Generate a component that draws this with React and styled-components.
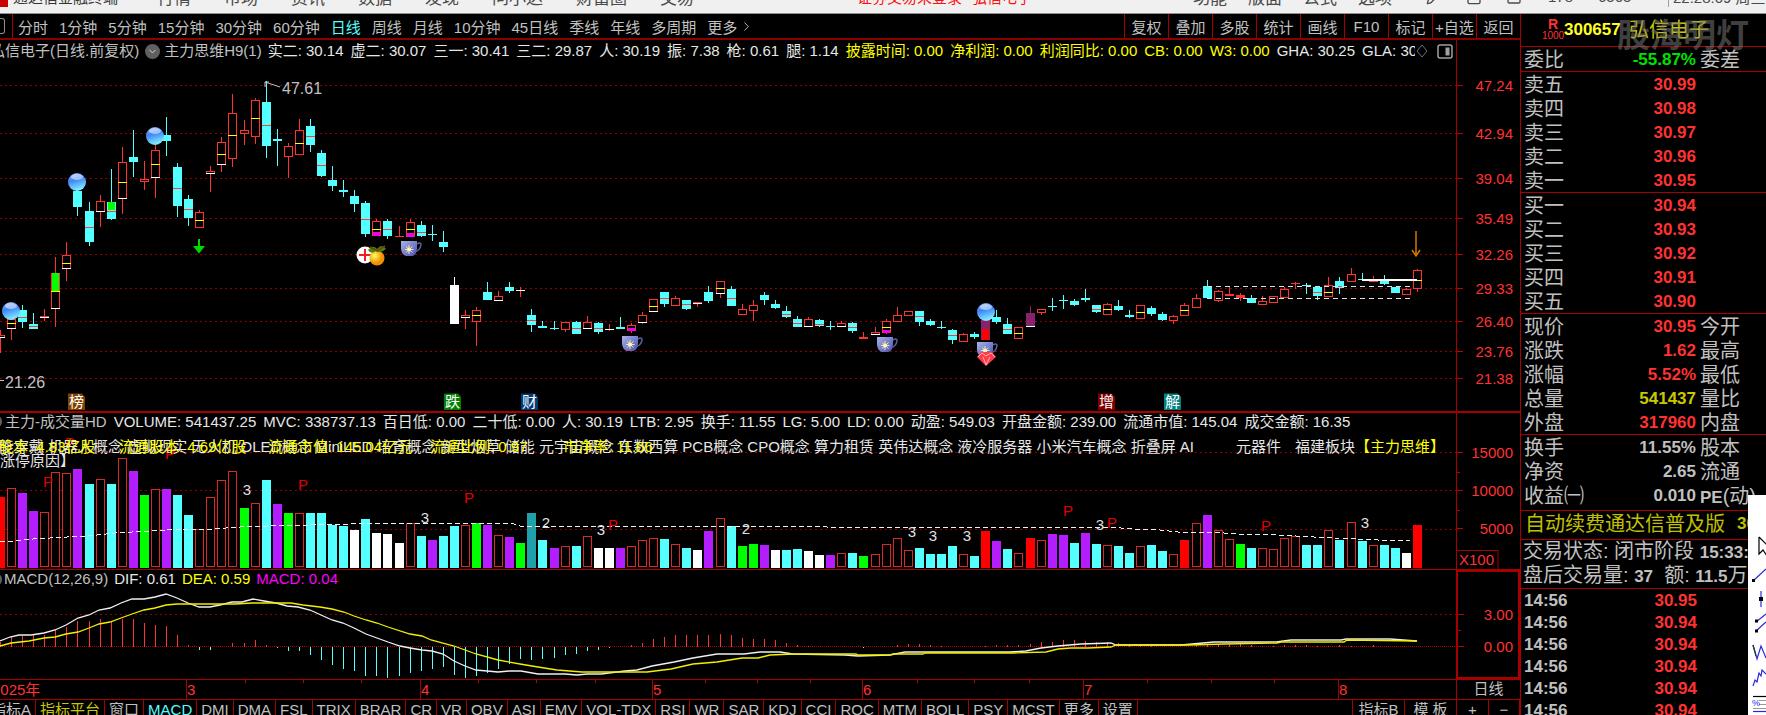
import React from "react";
import styled, { createGlobalStyle } from "styled-components";
import { Pencil, Lock, Square, ChevronDown, ChevronRight } from "lucide-react";

const RED = "#a80000";
const GREY = "#c0c0c0";
const CYAN = "#54ffff";
const UP = "#ff3232";

const GlobalStyle = createGlobalStyle`
  * { box-sizing: border-box; }
  body {
    margin: 0;
    background: #000;
    overflow: hidden;
    font-family: "Liberation Sans", "Noto Sans CJK SC", sans-serif;
    font-size: 15px;
    color: ${GREY};
  }
  button {
    margin: 0;
    padding: 0;
    border: 0;
    background: none;
    color: inherit;
    font: inherit;
    white-space: nowrap;
    cursor: pointer;
  }
`;

const Page = styled.div`
  display: flex;
  flex-direction: column;
  height: 100vh;
  overflow: hidden;
`;

/* ---------- menu bar ---------- */
const MenuBar = styled.header`
  display: flex;
  flex: none;
  align-items: center;
  height: 34px;
  margin-top: -20px;
  background: #f0f0f0;
  border-bottom: 1px solid #909090;
  color: #4a4a4a;
  white-space: nowrap;
  overflow: hidden;
`;
const Logo = styled.span`
  width: 8px;
  height: 20px;
  margin-right: 5px;
  background: #cc0000;
`;
const Brand = styled.span`
  margin-right: 39px;
  color: #333;
`;
const MenuGroup = styled.nav`
  display: flex;
  gap: ${(p) => p.$gap}px;
  font-size: 17px;
`;
const Alert = styled.span`
  display: flex;
  gap: 10px;
  margin-left: 163px;
  color: #ff1010;
`;
const MenuRight = styled.div`
  display: flex;
  align-items: center;
  width: 573px;
  margin-left: auto;
`;
const MenuIcons = styled.div`
  display: flex;
  gap: 24px;
  width: 122px;
  margin-left: 34px;
`;
const Count = styled.span`
  width: 50px;
`;
const Clock = styled.span`
  margin-left: 20px;
  padding-left: 4px;
  border-left: 1px solid #a0a0a0;
`;

/* ---------- page frame ---------- */
const Body = styled.div`
  display: flex;
  flex: 1;
  min-height: 0;
`;
const Main = styled.main`
  display: flex;
  flex: 1;
  flex-direction: column;
  min-width: 0;
`;
const Toolbar = styled.div`
  display: flex;
  flex: none;
  height: 26px;
  border-bottom: 2px solid #8b0000;
  overflow: hidden;
`;
const Handle = styled.button`
  width: 13px;
  flex: none;
  border-right: 1px solid ${RED};
  display: flex;
  align-items: center;
  &::before {
    content: "";
    width: 4px;
    height: 14px;
    border: 1px solid #909090;
    border-left: 0;
    border-radius: 0 3px 3px 0;
  }
`;
const Periods = styled.div`
  display: flex;
  align-items: center;
  gap: 11px;
  flex: 1;
  min-width: 0;
  padding-left: 5px;
  overflow: hidden;
`;
const Period = styled.button`
  display: flex;
  align-items: center;
  gap: 2px;
  color: ${(p) => (p.$active ? CYAN : GREY)};
`;
const Tools = styled.div`
  display: flex;
  flex: none;
`;
const Tool = styled.button`
  width: 44px;
  border-left: 1px solid ${RED};
`;

/* ---------- chart panels ---------- */
const Panel = styled.section`
  display: flex;
  flex: none;
  border-bottom: ${(p) => p.$line}px solid ${RED};
`;
const Plot = styled.div`
  flex: 1;
  min-width: 0;
`;
const Info = styled.div`
  display: flex;
  align-items: center;
  gap: ${(p) => p.$gap || 6}px;
  height: ${(p) => p.$h}px;
  margin-left: ${(p) => p.$shift || 0}px;
  padding-bottom: 2px;
  line-height: 18px;
  white-space: nowrap;
`;
const Values = styled.div`
  display: flex;
  flex: 1;
  align-items: baseline;
  gap: 7px;
  min-width: 0;
  overflow: hidden;
`;
const Value = styled.span`
  flex: none;
  color: ${(p) => p.$color || "#e6e6e6"};
`;
const Name = styled.span`
  flex: none;
`;
const Fold = styled.button`
  display: flex;
  flex: none;
  align-items: center;
  justify-content: center;
  width: 15px;
  height: 15px;
  margin-right: ${(p) => p.$tight || 0}px;
  border-radius: 50%;
  background: #606060;
  color: #ddd;
`;
const InfoIcons = styled.div`
  display: flex;
  flex: none;
  align-items: center;
  gap: 9px;
  width: 40px;
  margin-left: -5px;
`;
const Chart = styled.svg`
  display: block;
  width: 100%;
  height: ${(p) => p.$h}px;
  font-size: 15px;
`;
const Axis = styled.div`
  width: 64px;
  flex: none;
  border: 0 solid ${RED};
  border-left-width: 1px;
  ${(p) => p.$boxed && `border-width: 2px;`}
`;

const TimeRow = styled.div`
  display: flex;
  flex: none;
  height: 20px;
  border-bottom: 1px solid ${RED};
`;
const TimeUnit = styled.button`
  width: 64px;
  padding-bottom: 2px;
  border-left: 1px solid ${RED};
  line-height: 16px;
`;
const Tabs = styled.div`
  display: flex;
  flex: none;
  height: 20px;
`;
const TabList = styled.div`
  display: flex;
  flex: 1;
  min-width: 0;
  margin-left: -13px;
  overflow: hidden;
`;
const Tab = styled.button`
  flex: none;
  min-width: ${(p) => p.$w || 0}px;
  padding: 0 4px;
  border-right: 1px solid ${RED};
  color: ${(p) => p.$color || GREY};
  line-height: 18px;
`;
const TabEnd = styled.div`
  display: flex;
  border-left: 1px solid ${RED};
`;

/* ---------- quote panel ---------- */
const Side = styled.aside`
  position: relative;
  flex: none;
  width: 246px;
  border-left: 1px solid ${RED};
  overflow: hidden;
`;
const StockHead = styled.div`
  display: flex;
  align-items: center;
  height: 33px;
  padding-left: 22px;
  border-bottom: 1px solid ${RED};
  line-height: 24px;
  white-space: nowrap;
`;
const Margin = styled.span`
  display: flex;
  flex-direction: column;
  align-items: center;
  width: 20px;
  margin-right: 1px;
  color: ${UP};
  font: 10px/12px "Liberation Sans", sans-serif;
  b { font-size: 14px; }
`;
const Code = styled.b`
  width: 65px;
  color: #ffff20;
  font-size: 17px;
`;
const StockName = styled.span`
  color: #c8c800;
  font-size: 20px;
`;
const Watermark = styled.span`
  position: absolute;
  left: 96px;
  top: 2px;
  z-index: 1;
  color: rgba(120, 120, 120, 0.55);
  font-size: 33px;
  font-weight: 700;
  line-height: 40px;
  pointer-events: none;
`;
const Quote = styled.table`
  width: 100%;
  table-layout: fixed;
  border-collapse: separate;
  border-spacing: 0;
  padding-bottom: ${(p) => p.$pad || 0}px;
  border-bottom: 1px solid ${RED};
  white-space: nowrap;
  th, td {
    height: 24px;
    padding: 2px 0 0;
    font-size: 20px;
    font-weight: 400;
    line-height: 22px;
    text-align: left;
  }
  th:first-child { width: 74px; padding-left: 3px; }
  td { width: 101px; }
  td + th { padding-left: 4px; }
`;
const Num = styled.td`
  && {
    color: ${(p) => p.$color || UP};
    font-size: 17px;
    font-weight: 700;
    text-align: right;
  }
`;
const Strong = styled.b`
  font-size: 17px;
  line-height: 1;
`;
const Note = styled.div`
  display: flex;
  align-items: center;
  gap: 12px;
  height: 29px;
  padding: 0 0 3px 4px;
  border-bottom: 1px solid ${RED};
  color: #c0c000;
  font-size: 20px;
  line-height: 22px;
  white-space: nowrap;
`;
const Status = styled.div`
  border-bottom: 1px solid ${RED};
`;
const StatusLine = styled.div`
  height: 24px;
  padding-left: 2px;
  font-size: 20px;
  line-height: 22px;
  white-space: nowrap;
`;
const Ticks = styled.table`
  width: 176px;
  padding-top: 1px;
  border-spacing: 0;
  td {
    height: 22px;
    padding: 0 0 0 3px;
    font-size: 17px;
    font-weight: 700;
    line-height: 20px;
  }
  td + td { padding: 0; color: ${UP}; text-align: right; }
`;
const DrawPanel = styled.div`
  position: absolute;
  top: 481px;
  right: 0;
  bottom: 0;
  width: 18px;
  background: #fff;
  overflow: hidden;
`;

/* ---------- data ---------- */
const PITCH = 11.07;
const cx = (i) => Math.round(i * PITCH);

// kind, high, body top, body bottom, low, {y: mid mark, w: white base, g/m/r: coloured part}
const candles = [
  ["h", 330, 335, 338, 353, { w: 1 }], ["h", 318, 319, 329, 340, { y: 323, w: 1 }],
  ["c", 305, 310, 322, 328, { y: 317 }], ["c", 313, 324, 329, 329, { y: 326 }],
  ["h", 309, 316, 318, 321, { w: 1 }], ["h", 257, 273, 309, 327, { y: 291, w: 1, g: [273, 291] }],
  ["h", 242, 255, 269, 281, { y: 263, w: 1 }], ["c", 190, 191, 207, 216, {}],
  ["c", 202, 211, 242, 246, { y: 227 }], ["h", 195, 201, 212, 227, { w: 1 }],
  ["c", 169, 202, 219, 220, { y: 211, g: [202, 210] }], ["h", 147, 162, 199, 214, { y: 182, w: 1 }],
  ["c", 130, 157, 162, 177, {}], ["h", 161, 179, 182, 190, {}],
  ["h", 144, 150, 178, 198, { y: 164, w: 1 }], ["c", 117, 135, 141, 156, {}],
  ["c", 163, 167, 206, 217, { y: 188 }], ["c", 195, 199, 218, 226, { y: 209 }],
  ["h", 210, 212, 228, 228, { y: 220 }], ["h", 166, 171, 174, 192, { w: 1 }],
  ["h", 137, 142, 165, 172, { y: 154, w: 1 }], ["h", 94, 113, 159, 167, { y: 135 }],
  ["h", 120, 130, 134, 145, {}], ["h", 98, 100, 137, 144, { y: 118 }],
  ["c", 81, 102, 146, 158, { y: 125 }], ["c", 129, 139, 141, 166, {}],
  ["h", 143, 146, 157, 178, {}], ["h", 119, 130, 155, 155, { y: 143 }],
  ["c", 119, 126, 145, 152, { y: 136 }], ["c", 150, 153, 176, 177, { y: 165 }],
  ["c", 166, 180, 186, 191, {}], ["c", 180, 190, 192, 197, {}],
  ["c", 190, 196, 204, 212, {}], ["c", 201, 203, 234, 237, { y: 219 }],
  ["h", 219, 221, 236, 236, { y: 229, m: [232, 236] }], ["c", 219, 221, 236, 239, { y: 229 }],
  ["f", 226, 236, 237, 237, {}], ["h", 219, 222, 237, 237, { y: 229, m: [233, 237] }],
  ["c", 221, 225, 236, 237, { y: 232 }], ["c", 225, 234, 235, 241, {}],
  ["c", 231, 242, 247, 252, {}], ["w", 277, 285, 324, 324, {}],
  ["h", 310, 315, 318, 329, { w: 1 }], ["h", 307, 310, 322, 346, { y: 315 }],
  ["c", 282, 292, 300, 300, {}], ["h", 291, 296, 301, 301, { w: 1 }],
  ["c", 282, 287, 291, 293, {}], ["f", 287, 290, 291, 297, { w: 1 }],
  ["c", 309, 315, 325, 332, { y: 320 }], ["c", 321, 326, 328, 328, {}],
  ["c", 321, 328, 329, 330, {}], ["h", 322, 322, 330, 332, {}],
  ["c", 321, 322, 334, 334, { y: 328 }], ["h", 316, 322, 329, 329, { w: 1 }],
  ["c", 322, 323, 332, 334, { y: 328 }], ["f", 324, 329, 330, 331, { w: 1 }],
  ["c", 317, 327, 329, 329, {}], ["h", 323, 325, 331, 333, { m: [328, 331] }],
  ["h", 312, 315, 323, 324, { w: 1 }], ["h", 299, 299, 312, 312, { y: 306, w: 1 }],
  ["c", 292, 292, 304, 307, { y: 298 }], ["h", 296, 298, 306, 306, {}],
  ["c", 300, 300, 309, 310, { y: 304 }], ["f", 302, 302, 304, 307, { w: 1 }],
  ["c", 286, 292, 301, 303, {}], ["h", 281, 281, 294, 298, { y: 288, w: 1 }],
  ["c", 286, 289, 306, 306, { y: 298 }], ["h", 304, 309, 315, 315, {}],
  ["h", 300, 305, 311, 321, {}], ["c", 292, 295, 300, 305, {}],
  ["c", 300, 304, 308, 309, {}], ["c", 306, 311, 317, 318, { y: 314 }],
  ["c", 316, 319, 327, 327, { y: 323 }], ["h", 317, 319, 327, 327, { w: 1 }],
  ["c", 319, 320, 326, 327, { y: 324 }], ["c", 321, 326, 327, 330, {}],
  ["h", 321, 323, 327, 327, { w: 1 }], ["c", 322, 323, 331, 333, { y: 327 }],
  ["f", 332, 337, 339, 339, {}], ["h", 327, 332, 335, 335, { w: 1 }],
  ["h", 319, 321, 333, 334, { y: 327, m: [330, 333] }], ["h", 307, 315, 322, 322, {}],
  ["h", 311, 311, 316, 316, {}], ["c", 311, 311, 322, 326, { y: 316 }],
  ["c", 319, 321, 325, 326, {}], ["c", 321, 327, 328, 329, {}],
  ["c", 329, 330, 340, 344, { y: 335 }], ["h", 333, 334, 342, 342, {}],
  ["c", 332, 334, 337, 339, {}], ["p", 320, 320, 340, 340, { r: [329, 340] }],
  ["c", 310, 317, 322, 324, {}], ["c", 318, 324, 334, 334, { y: 329 }],
  ["h", 327, 327, 339, 339, { y: 333 }], ["p", 306, 313, 327, 327, { w: 1 }],
  ["h", 309, 309, 313, 315, {}], ["c", 298, 306, 307, 311, {}],
  ["c", 295, 300, 301, 309, {}], ["c", 299, 301, 305, 306, {}],
  ["c", 289, 298, 300, 302, {}], ["c", 305, 305, 312, 313, { y: 309 }],
  ["h", 303, 304, 315, 315, { y: 309 }], ["c", 300, 306, 310, 311, {}],
  ["c", 310, 315, 317, 318, {}], ["h", 305, 305, 319, 319, { y: 312 }],
  ["c", 306, 308, 314, 316, {}], ["c", 312, 314, 320, 321, {}],
  ["h", 315, 316, 321, 324, {}], ["h", 303, 305, 316, 316, { y: 310 }],
  ["h", 294, 298, 308, 308, {}], ["c", 280, 286, 298, 298, {}],
  ["h", 290, 291, 301, 302, {}], ["f", 287, 294, 296, 296, {}],
  ["f", 293, 295, 298, 301, {}], ["c", 295, 298, 303, 303, {}],
  ["h", 296, 301, 305, 305, {}], ["h", 296, 296, 303, 303, {}],
  ["h", 287, 289, 298, 298, {}], ["f", 282, 283, 284, 289, {}],
  ["c", 283, 285, 286, 294, {}], ["c", 286, 287, 296, 300, { y: 292 }],
  ["h", 277, 285, 297, 297, { y: 292 }], ["c", 277, 281, 288, 294, { y: 286 }],
  ["h", 268, 274, 282, 282, {}], ["c", 273, 279, 280, 280, {}],
  ["f", 276, 280, 282, 282, {}], ["c", 275, 280, 284, 285, {}],
  ["c", 287, 287, 293, 293, {}], ["h", 288, 289, 295, 295, {}],
  ["h", 269, 270, 289, 292, { y: 280 }],
];

// kind letter followed by the bar's height in pixels
const volumes =
  "r71 h80 p75 p57 h56 h96 h95 p99 c84 h89 c84 h110 p97 g73 h79 p79 c73 c53 h39 h71 h88 h97 g60 h65 c88 p64 g55 h55 c55 c55 c43 c42 w38 c49 w35 w34 w25 h45 c32 p28 c32 c42 h43 g45 p43 h33 p31 g25 t55 c28 p20 h22 c22 h32 w20 w20 p20 h22 h28 h30 c29 h24 c20 w18 p37 h50 c42 g22 g24 p23 w18 c18 c19 w17 w13 p13 h15 c15 g12 h14 h24 h30 h18 c20 c14 c14 c22 h14 c12 r37 p27 c19 h15 r30 h28 p34 p33 c25 p35 c24 h23 c22 c15 h22 c23 c17 h14 r28 h45 p53 h38 h29 g24 c20 h20 h19 h30 h32 c23 c23 h38 c28 h46 c27 h23 c23 c20 w15 r43".split(" ");

const volFill = { r: "#ff0000", p: "#b41eff", c: CYAN, g: "#00ff00", w: "#ffffff", t: "#20a0a8" };

const macdBars = [
  5, 10, 11, 12, 12, 17, 20, 26, 26, 28, 25, 28, 28, 24, 22, 21, 12, 2, -3, -3, 0, 4, 4, 7, 2, -1,
  -4, -4, -8, -13, -18, -22, -24, -29, -29, -31, -29, -26, -24, -22, -20, -28, -31, -29, -26, -22,
  -17, -12, -13, -12, -11, -8, -7, -4, -3, -1, 0, 2, 4, 8, 10, 12, 12, 12, 12, 13, 12, 9, 8, 8, 7,
  4, 2, 1, 0, 0, 0, 0, -1, 0, 0, 2, 3, 3, 2, 1, 0, 0, 0, 1, 2, 2, 2, 3, 5, 5, 7, 7, 6, 5, 5, 4, 2,
  2, 1, 0, 0, 0, 2, 2, 3, 3, 4, 2, 1, 1, 2, 2, 2, 1, 1, 2, 1, 1, 2,
];

const dif =
  "0,641 10,637 19,635 31,635 44,633 55,630 66,625 78,618 89,615 99,610 110,608 121,603 132,599 144,599 155,597 166,594 177,598 188,603 199,607 210,607 220,605 232,602 242,602 253,599 264,601 276,603 287,606 298,607 310,610 321,615 332,620 343,623 354,628 366,634 377,638 388,642 400,646 410,648 422,650 432,651 443,654 454,661 465,666 476,670 487,671 498,672 509,671 521,671 538,674 565,674 577,675 587,674 601,674 625,671 637,670 652,666 674,662 693,658 717,654 744,654 760,652 780,652 793,654 845,655 858,656 890,655 905,652 945,652 1010,652 1026,651 1041,648 1058,646 1081,644 1111,643 1116,645 1181,645 1214,642 1276,642 1291,640 1341,640 1346,639 1390,639 1417,641";
const dea =
  "0,646 11,643 29,641 44,638 55,637 66,634 78,632 89,628 99,624 110,622 121,618 132,614 144,610 155,608 166,605 177,604 235,604 252,603 291,603 303,605 320,607 332,609 344,612 354,616 366,620 377,623 388,627 410,634 422,636 431,640 454,646 465,650 476,654 498,660 520,664 538,667 557,670 582,672 647,672 671,669 693,664 717,662 742,658 758,658 770,655 793,654 856,654 858,655 890,655 893,654 923,654 925,653 1013,653 1046,652 1058,649 1071,648 1088,648 1111,647 1116,645 1189,645 1224,644 1277,643 1281,642 1344,642 1347,640 1417,641";
const volMa =
  "0,542 15,541 33,539 67,537 88,536 115,533 150,531 182,529 213,529 240,527 267,526 310,525 350,524 370,523 450,523 514,524 520,526 823,526 827,527 1106,527 1135,529 1160,530 1178,532 1210,532 1238,534 1278,535 1314,537 1335,538 1378,540 1410,541";

const priceTicks = [
  [86, "47.24"], [134, "42.94"], [179, "39.04"], [219, "35.49"], [255, "32.26"],
  [289, "29.33"], [322, "26.40"], [352, "23.76"], [379, "21.38"],
];
const volTicks = [[453, "15000"], [491, "10000"], [529, "5000"]];

const marks = [
  ["P", 48, 482], ["P", 70, 443], ["P", 170, 454], ["P", 303, 485], ["P", 469, 498], ["P", 613, 525],
  ["P", 1068, 511], ["P", 1112, 523], ["P", 1266, 526], ["3", 247, 490], ["3", 425, 518],
  ["2", 546, 523], ["3", 601, 530], ["2", 746, 529], ["3", 912, 532], ["3", 933, 536],
  ["3", 967, 536], ["3", 1100, 525], ["3", 1365, 523],
];

const badges = [
  ["榜", 68, "#804000"], ["跌", 444, "#008000"], ["财", 521, "#003c78"],
  ["增", 1098, "#800000"], ["解", 1164, "#008080"],
];

const overlayNotes = [
  ["总股本: 4.83亿股", -17], ["流通股本: 4.69亿股", 119], ["流通市值: 145.04亿元", 268],
  ["流通比例: 0.97", 430], ["市净率: 11.66", 563],
];

const months = [[186, "3"], [420, "4"], [652, "5"], [862, "6"], [1083, "7"], [1338, "8"]];
const weeks = [245, 303, 361, 478, 536, 595, 705, 757, 810, 917, 974, 1029, 1147, 1211, 1274];

const periods = ["分时", "1分钟", "5分钟", "15分钟", "30分钟", "60分钟", "日线", "周线", "月线", "10分钟", "45日线", "季线", "年线", "多周期", "更多"];
const tools = ["复权", "叠加", "多股", "统计", "画线", "F10", "标记", "+自选", "返回"];
const whiteValues = ["实二: 30.14", "虚二: 30.07", "三一: 30.41", "三二: 29.87", "人: 30.19", "振: 7.38", "枪: 0.61", "腿: 1.14"];
const yellowValues = ["披露时间: 0.00", "净利润: 0.00", "利润同比: 0.00", "CB: 0.00", "W3: 0.00"];
const volValues = ["VOLUME: 541437.25", "MVC: 338737.13", "百日低: 0.00", "二十低: 0.00", "人: 30.19", "LTB: 2.95", "换手: 11.55", "LG: 5.00", "LD: 0.00", "动盈: 549.03", "开盘金额: 239.00", "流通市值: 145.04", "成交金额: 16.35"];
const indicators = ["指标A", "指标平台", "窗口", "MACD", "DMI", "DMA", "FSL", "TRIX", "BRAR", "CR", "VR", "OBV", "ASI", "EMV", "VOL-TDX", "RSI", "WR", "SAR", "KDJ", "CCI", "ROC", "MTM", "BOLL", "PSY", "MCST", "更多", "设置"];
const tabColor = { 指标平台: "#c8c800", MACD: CYAN };

const sells = [["卖五", "30.99"], ["卖四", "30.98"], ["卖三", "30.97"], ["卖二", "30.96"], ["卖一", "30.95"]];
const buys = [["买一", "30.94"], ["买二", "30.93"], ["买三", "30.92"], ["买四", "30.91"], ["买五", "30.90"]];
const stats = [
  ["现价", "30.95", "今开"], ["涨跌", "1.62", "最高"], ["涨幅", "5.52%", "最低"],
  ["总量", "541437", "量比", "#c8c800"], ["外盘", "317960", "内盘"],
];
const basics = [
  ["换手", "11.55%", "股本", GREY], ["净资", "2.65", "流通", GREY],
  ["收益㈠", "0.010", <><Strong>PE</Strong>(动)</>, GREY],
];
const trades = ["30.95", "30.94", "30.94", "30.94", "30.94", "30.94"];

/* ---------- drawings ---------- */
const Grid = ({ ys }) =>
  ys.map((y) => (
    <line key={y} x1="0" x2="100%" y1={y + 0.5} y2={y + 0.5} stroke="#900000" strokeDasharray="2 3" />
  ));

const Candle = ({ i, d: [kind, hi, top, bot, lo, o] }) => {
  const x = cx(i);
  const color = { h: UP, f: UP, c: CYAN, w: "#fff", p: "#88226c" }[kind];
  const h = Math.max(bot - top, 1);
  return (
    <g>
      {hi < top && <rect x={x} y={hi} width="1" height={top - hi} fill={color} />}
      {lo > bot && <rect x={x} y={bot} width="1" height={lo - bot} fill={color} />}
      {kind === "h" ? (
        <rect x={x - 3.5} y={top + 0.5} width="8" height={Math.max(h - 1, 1)} fill="#000" stroke={color} />
      ) : (
        <rect x={x - 4} y={top} width="9" height={h} fill={color} />
      )}
      {o.g && <rect x={x - 3} y={o.g[0]} width="7" height={o.g[1] - o.g[0]} fill="#00ff00" />}
      {o.m && <rect x={x - 3} y={o.m[0]} width="7" height={o.m[1] - o.m[0]} fill="#f000f0" />}
      {o.r && <rect x={x - 3} y={o.r[0]} width="7" height={o.r[1] - o.r[0]} fill="#ff0000" />}
      {o.y && <rect x={x - 4} y={o.y} width="9" height="1" fill={kind === "c" ? "#ff3c3c" : "#ffff00"} />}
      {o.w && <rect x={x - 4} y={bot - 1} width="9" height="1" fill="#fff" />}
    </g>
  );
};

const Ball = ({ x, y }) => (
  <g>
    <circle cx={x} cy={y} r="9" fill="url(#ball)" />
    <ellipse cx={x} cy={y - 5} rx="6" ry="3" fill="#fff" opacity="0.5" />
  </g>
);

const Cup = ({ x, y }) => (
  <g transform={`translate(${x} ${y})`}>
    <path d="M14 4 Q20 0 20 4 Q19 10 13 11" fill="none" stroke="#5a62a0" strokeWidth="1.5" />
    <path d="M0 0 H16 V8 Q15 15 11 15 H5 Q1 14 0 8 Z" fill="url(#cup)" />
    <path d="M8 4 V13 M4 8.500 H12.500 M5 5.500 L11.500 11.500 M11.500 5.500 L5 11.500" stroke="#f4e4a0" strokeWidth="1" />
    <circle cx="8" cy="8.500" r="2" fill="#fff3c0" />
  </g>
);

const PriceChart = () => (
  <Chart $h={347} role="img" aria-label="日线">
    <defs>
      <linearGradient id="ball" x1="0" y1="0" x2="0.3" y2="1">
        <stop offset="0" stopColor="#a8b8f0" />
        <stop offset="0.45" stopColor="#3c84f8" />
        <stop offset="1" stopColor="#80e8ff" />
      </linearGradient>
      <linearGradient id="cup" x1="0" y1="0" x2="1" y2="1">
        <stop offset="0" stopColor="#a8b4e8" />
        <stop offset="1" stopColor="#4850b0" />
      </linearGradient>
      <radialGradient id="fruit" cx="0.35" cy="0.35">
        <stop offset="0" stopColor="#ffff60" />
        <stop offset="1" stopColor="#f09000" />
      </radialGradient>
    </defs>
    <g transform="translate(0 -64)">
      <g shapeRendering="crispEdges">
        <Grid ys={priceTicks.map((t) => t[0] - 1)} />
        {candles.map((d, i) => <Candle key={i} i={i} d={d} />)}
        <path d="M1207 286.500 H1413 M1207 298.500 H1413" stroke="#e0e0e0" strokeDasharray="5 4" />
        <rect x="1362" y="279" width="55" height="2" fill="#fff" />
      </g>
      <path d="M265 82 L280 87 M265 87 V82 H269" fill="none" stroke={GREY} />
      <text x="282" y="94" fill={GREY} fontSize="16">47.61</text>
      <text x="5" y="388" fill={GREY} fontSize="16">21.26</text>
      <path d="M0 380.500 H4" stroke={GREY} />
      <Ball x={11} y={311} />
      <Ball x={77} y={182} />
      <Ball x={155} y={136} />
      <Ball x={986} y={312} />
      <path d="M198 239 H200 V246 H205 L199 253.500 L193 246 H198 Z" fill="#00d800" />
      <circle cx="365" cy="255" r="8.500" fill="#fff" />
      <path d="M365 249 V261 M359 255 H371" stroke="#f02020" strokeWidth="2" />
      <circle cx="377" cy="258" r="7.500" fill="url(#fruit)" />
      <path d="M368 250 Q373 244 377 249 Q382 243 386 249 Q380 254 376 251 Q371 255 368 250 Z" fill="#508010" />
      <path d="M370 247 L377 251 L385 246" fill="none" stroke="#704010" strokeWidth="1.5" />
      <Cup x={401} y={241} />
      <Cup x={622} y={336} />
      <Cup x={877} y={337} />
      <Cup x={977} y={342} />
      <path d="M981 352 H992 L996 357 L986 366 L977 357 Z" fill="#ff3c48" />
      <path d="M978 357 L982 353 L986 356 L991 353 L995 357 M983 357 L986 365 L990 357" fill="none" stroke="#ffb0b0" />
      <path d="M1416 231 V256 M1412 250 L1416 256 L1420 250" fill="none" stroke="#d87800" strokeWidth="1.5" />
      {badges.map(([t, x, c]) => (
        <g key={t}>
          <path d={`M${x} 393.500 H${x + 14} L${x + 17} 397 V410 H${x} Z`} fill={c} />
          <text x={x + 1} y="407" fill="#fff">{t}</text>
        </g>
      ))}
    </g>
  </Chart>
);

const Scale = ({ h, offset, ticks, minor = [], right, children }) => (
  <Chart $h={h} role="presentation">
    <g transform={`translate(0 ${-offset})`}>
      {ticks.map(([y, t]) => (
        <g key={t}>
          <path d={`M0 ${y - 0.5} H6`} stroke="#c00000" />
          <text x={right} y={y + 5} textAnchor="end" fill={UP}>{t}</text>
        </g>
      ))}
      {minor.map((y) => <path key={y} d={`M0 ${y + 0.5} H3`} stroke="#c00000" />)}
      {children}
    </g>
  </Chart>
);

const VolumeChart = () => (
  <Chart $h={137} role="img" aria-label="成交量">
    <g transform="translate(0 -432)">
      <g shapeRendering="crispEdges">
        <Grid ys={[452, 490, 529]} />
        {volumes.map((v, i) => {
          const kind = v[0];
          const h = Number(v.slice(1));
          return kind === "h" ? (
            <rect key={i} x={cx(i) - 3.5} y={568.5 - h} width="8" height={h - 2} fill="#000" stroke="#d82828" />
          ) : (
            <rect key={i} x={cx(i) - 4} y={568 - h} width="9" height={h} fill={volFill[kind]} />
          );
        })}
        <polyline points={volMa} fill="none" stroke="#f0f0f0" strokeDasharray="5 3" />
      </g>
      {marks.map(([t, x, y]) => (
        <text key={x} x={x} y={y + 5} textAnchor="middle" fill={t === "P" ? "#e00000" : "#e0e0e0"}>{t}</text>
      ))}
      <text x="1194" y="452" textAnchor="end" fill="#e6e6e6">
        智能穿戴 机器人概念 虚拟现实 无人机 OLED概念 MiniLED 培育概念 新型烟草 储能 元宇宙概念 东数西算 PCB概念 CPO概念 算力租赁 英伟达概念 液冷服务器 小米汽车概念 折叠屏 AI
      </text>
      <text x="1236" y="452" fill="#e6e6e6">元器件</text>
      <text x="1295" y="452" fill="#e6e6e6">福建板块</text>
      <text x="1355" y="452" fill="#ffff00">【主力思维】</text>
      {overlayNotes.map(([t, x]) => <text key={t} x={x} y="452" fill="#ffff00">{t}</text>)}
      <text x="0" y="466" fill="#e6e6e6">涨停原因】</text>
    </g>
  </Chart>
);

const MacdChart = () => (
  <Chart $h={89} role="img" aria-label="MACD">
    <g transform="translate(0 -590)">
      <g shapeRendering="crispEdges">
        <Grid ys={[614]} />
        <line x1="0" x2="100%" y1="646.5" y2="646.5" stroke="#b00000" strokeDasharray="1 1" />
        {macdBars.map((v, i) =>
          v === 0 ? null : (
            <rect key={i} x={cx(i)} y={v > 0 ? 647 - v : 647} width="1" height={Math.abs(v)} fill={v > 0 ? UP : CYAN} />
          )
        )}
      </g>
      <polyline points={dif} fill="none" stroke="#f0f0f0" strokeWidth="1.3" />
      <polyline points={dea} fill="none" stroke="#f0f000" strokeWidth="1.3" />
    </g>
  </Chart>
);

const TimeAxis = () => (
  <Chart $h={19} role="img" aria-label="2025年">
    <text x="-8" y="15" fill={UP}>2025年</text>
    {months.map(([x, t]) => (
      <g key={t}>
        <path d={`M${x + 0.5} 0 V19`} stroke={RED} />
        <text x={x + 1} y="15" fill={UP}>{t}</text>
      </g>
    ))}
    {weeks.map((x) => <path key={x} d={`M${x + 0.5} 0 V3`} stroke="#c00000" />)}
  </Chart>
);

const QuoteTable = ({ rows, pad }) => (
  <Quote $pad={pad}>
    <tbody>
      {rows.map(([label, value, next, color]) => (
        <tr key={label}>
          <th scope="row">{label}</th>
          <Num $color={color}>{value}</Num>
          <th>{next}</th>
        </tr>
      ))}
    </tbody>
  </Quote>
);

const DrawTools = () => (
  <DrawPanel>
    <svg width="18" height="234" fill="none" stroke="#2828e0" strokeWidth="1.200" aria-label="画线工具">
      <path d="M11 42 V59 L15 55 L19 61" stroke="#000" />
      <path d="M11 42 L20 51" stroke="#000" />
      <path d="M5 86 L18 74" />
      <rect x="4" y="84" width="3" height="3" fill="#000" stroke="none" />
      <path d="M13 96 V112" />
      <rect x="11" y="102" width="4" height="4" fill="#000" stroke="none" />
      <path d="M8 127 L18 119 M8 136 L18 127" />
      <path d="M7 126 h3 M7 136 h3" stroke="#000" strokeWidth="3" />
      <path d="M5 150 L9 164 L13 151 L18 163" />
      <path d="M5 150 L8 161" stroke="#333" />
      <path d="M5 191 L7 185 L9 187 L11 178 L13 181 L14 175 L18 179" />
      <path d="M5 201.500 H18" stroke="#000" />
      <path d="M11 205.500 H18 M11 209.500 H18 M5 213.500 H18" stroke="#999" />
      <path d="M5 216.500 H18" />
      <text x="4" y="211" fill="#2828e0" stroke="none" fontSize="9">%</text>
    </svg>
  </DrawPanel>
);

export default function App() {
  return (
    <Page>
      <GlobalStyle />
      <MenuBar>
        <Logo />
        <Brand>通达信金融终端</Brand>
        <MenuGroup $gap={33}>
          {["行情", "市场", "资讯", "数据", "发现", "问小达", "财富圈", "交易"].map((t) => <button key={t}>{t}</button>)}
        </MenuGroup>
        <Alert><span>证券交易未登录</span><span>弘信电子</span></Alert>
        <MenuRight>
          <MenuGroup $gap={21}>
            {["功能", "版面", "公式", "选项"].map((t) => <button key={t}>{t}</button>)}
          </MenuGroup>
          <MenuIcons>
            <Pencil size={16} /><Lock size={16} /><Square size={16} />
          </MenuIcons>
          <Count>178</Count>
          <Count>6565</Count>
          <Clock>22:28:09 周三</Clock>
        </MenuRight>
      </MenuBar>
      <Body>
        <Main>
          <Toolbar>
            <Handle aria-label="展开" />
            <Periods>
              {periods.map((t) => (
                <Period key={t} $active={t === "日线"}>
                  {t}
                  {t === "更多" && <ChevronRight size={15} strokeWidth={1.5} />}
                </Period>
              ))}
            </Periods>
            <Tools>{tools.map((t) => <Tool key={t}>{t}</Tool>)}</Tools>
          </Toolbar>

          <Panel $line={2}>
            <Plot>
              <Info $h={24} $shift={-10}>
                <Name>弘信电子(日线.前复权)</Name>
                <Fold $tight={-2} aria-label="收起"><ChevronDown size={11} /></Fold>
                <Name>主力思维H9(1)</Name>
                <Values>
                  {whiteValues.map((t) => <Value key={t}>{t}</Value>)}
                  {yellowValues.map((t) => <Value key={t} $color="#ffff00">{t}</Value>)}
                  <Value>GHA: 30.25</Value>
                  <Value>GLA: 30.05</Value>
                </Values>
                <InfoIcons>
                  <svg width="12" height="14" fill="none" stroke="#707070">
                    <path d="M6 1 L11 7 L6 13 L1 7 Z" />
                  </svg>
                  <svg width="16" height="15" fill="none" stroke="#a0a0a0">
                    <rect x="1" y="1" width="14" height="13" rx="2" strokeWidth="1.5" />
                    <rect x="9" y="4" width="3" height="7" fill="#a0a0a0" />
                  </svg>
                </InfoIcons>
              </Info>
              <PriceChart />
            </Plot>
            <Axis>
              <Scale h={371} offset={40} ticks={priceTicks} right={56} />
            </Axis>
          </Panel>

          <Panel $line={1}>
            <Plot>
              <Info $h={19} $shift={-13} $gap={7}>
                <Fold $tight={-4} aria-label="收起" />
                <Name>主力-成交量HD</Name>
                <Values>
                  {volValues.map((t) => <Value key={t}>{t}</Value>)}
                </Values>
              </Info>
              <VolumeChart />
            </Plot>
            <Axis>
              <Scale h={156} offset={413} ticks={volTicks} minor={[472, 510]} right={56}>
                <rect x="-1" y="550.5" width="42" height="20" fill="none" stroke={RED} />
                <text x="2" y="565" fill={UP}>X100</text>
              </Scale>
            </Axis>
          </Panel>

          <Panel $line={1}>
            <Plot>
              <Info $h={20} $shift={-13}>
                <Fold $tight={-4} aria-label="收起" />
                <Name>MACD(12,26,9)</Name>
                <Value>DIF: 0.61</Value>
                <Value $color="#ffff00">DEA: 0.59</Value>
                <Value $color="#ff00ff">MACD: 0.04</Value>
              </Info>
              <MacdChart />
            </Plot>
            <Axis $boxed>
              <Scale h={105} offset={572} ticks={[[615, "3.00"], [647, "0.00"]]} minor={[630]} right={55} />
            </Axis>
          </Panel>

          <TimeRow>
            <Plot><TimeAxis /></Plot>
            <TimeUnit>日线</TimeUnit>
          </TimeRow>
          <Tabs>
            <TabList>
              {indicators.map((t) => <Tab key={t} $color={tabColor[t]}>{t}</Tab>)}
            </TabList>
            <TabEnd>
              <Tab $w={52}>指标B</Tab>
              <Tab $w={52}>模 板</Tab>
              <Tab $w={32}>+</Tab>
              <Tab $w={31}>−</Tab>
            </TabEnd>
          </Tabs>
        </Main>

        <Side>
          <StockHead>
            <Margin><b>R</b>1000</Margin>
            <Code>300657</Code>
            <StockName>弘信电子</StockName>
          </StockHead>
          <Watermark>股海明灯</Watermark>
          <QuoteTable rows={[["委比", "-55.87%", "委差", "#00e000"]]} />
          <QuoteTable rows={sells} />
          <QuoteTable rows={buys} />
          <QuoteTable rows={stats} />
          <QuoteTable rows={basics} pad={3} />
          <Note>自动续费通达信普及版 <Strong>300</Strong></Note>
          <Status>
            <StatusLine>交易状态: 闭市阶段 <Strong>15:33:00</Strong></StatusLine>
            <StatusLine>盘后交易量: <Strong>37</Strong>&nbsp; 额: <Strong>11.5</Strong>万</StatusLine>
          </Status>
          <Ticks>
            <tbody>
              {trades.map((p, i) => (
                <tr key={i}><td>14:56</td><td>{p}</td></tr>
              ))}
            </tbody>
          </Ticks>
          <DrawTools />
        </Side>
      </Body>
    </Page>
  );
}
